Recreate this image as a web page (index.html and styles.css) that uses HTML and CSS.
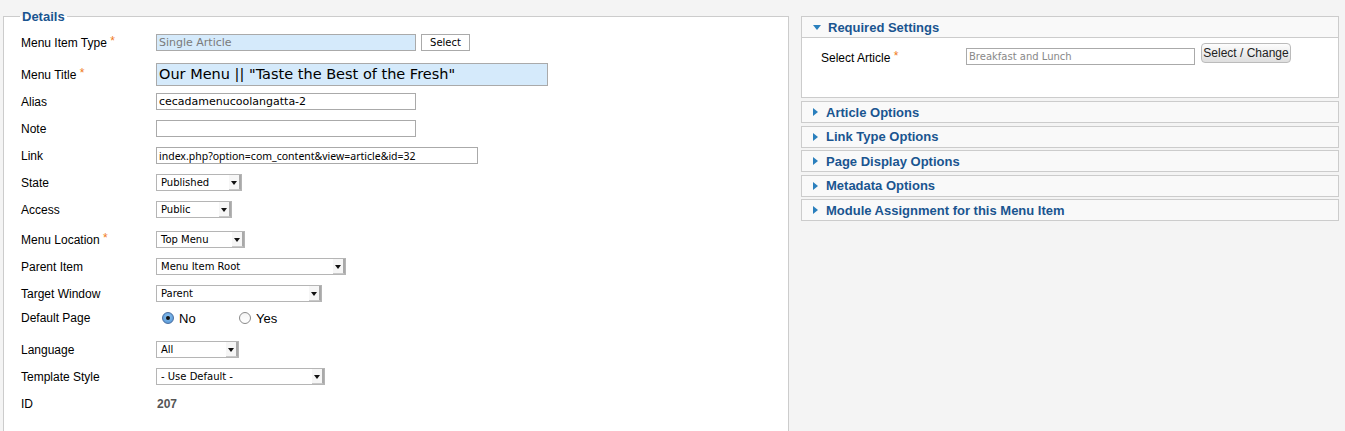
FILE: index.html
```html
<!DOCTYPE html>
<html>
  <head>
    <meta charset="UTF-8" />
    <title>Edit Menu Item</title>
    <link rel="stylesheet" href="styles.css">
  </head>
  <body>
    <div class="page">
      <fieldset class="details">
        <legend>Details</legend>

        <div class="row">
          <label>Menu Item Type <span class="star">*</span></label>
          <input type="text" class="field readonly w260" value="Single Article" readonly />
          <button class="plain-btn">Select</button>
        </div>

        <div class="row row-title">
          <label>Menu Title <span class="star">*</span></label>
          <input type="text" class="field title" value='Our Menu || "Taste the Best of the Fresh"' />
        </div>

        <div class="row">
          <label>Alias</label>
          <input type="text" class="field w260" value="cecadamenucoolangatta-2" />
        </div>

        <div class="row">
          <label>Note</label>
          <input type="text" class="field w260" value="" />
        </div>

        <div class="row">
          <label>Link</label>
          <input type="text" class="field link w322" value="index.php?option=com_content&amp;view=article&amp;id=32" />
        </div>

        <div class="row">
          <label>State</label>
          <div class="select" style="width: 86px"><span>Published</span><i class="arrow"></i></div>
        </div>

        <div class="row">
          <label>Access</label>
          <div class="select" style="width: 76px"><span>Public</span><i class="arrow"></i></div>
        </div>

        <div class="row row-loc">
          <label>Menu Location <span class="star">*</span></label>
          <div class="select" style="width: 89px"><span>Top Menu</span><i class="arrow"></i></div>
        </div>

        <div class="row">
          <label>Parent Item</label>
          <div class="select" style="width: 190px"><span>Menu Item Root</span><i class="arrow"></i></div>
        </div>

        <div class="row">
          <label>Target Window</label>
          <div class="select" style="width: 166px"><span>Parent</span><i class="arrow"></i></div>
        </div>

        <div class="row row-radio">
          <label>Default Page</label>
          <div class="radios">
            <span class="radio checked"></span><span class="radio-label">No</span>
            <span class="radio"></span><span class="radio-label">Yes</span>
          </div>
        </div>

        <div class="row row-lang">
          <label>Language</label>
          <div class="select" style="width: 83px"><span>All</span><i class="arrow"></i></div>
        </div>

        <div class="row">
          <label>Template Style</label>
          <div class="select" style="width: 169px"><span>- Use Default -</span><i class="arrow"></i></div>
        </div>

        <div class="row">
          <label>ID</label>
          <span class="id-value">207</span>
        </div>
      </fieldset>

      <div class="sliders">
        <div class="panel open">
          <h3 class="panel-head"><span class="tri down"></span>Required Settings</h3>
          <div class="panel-body">
            <label>Select Article <span class="star">*</span></label>
            <input type="text" class="field article" value="Breakfast and Lunch" readonly />
            <button class="round-btn">Select / Change</button>
          </div>
        </div>
        <div class="panel">
          <h3 class="panel-head"><span class="tri"></span>Article Options</h3>
        </div>
        <div class="panel">
          <h3 class="panel-head"><span class="tri"></span>Link Type Options</h3>
        </div>
        <div class="panel">
          <h3 class="panel-head"><span class="tri"></span>Page Display Options</h3>
        </div>
        <div class="panel">
          <h3 class="panel-head"><span class="tri"></span>Metadata Options</h3>
        </div>
        <div class="panel">
          <h3 class="panel-head"><span class="tri"></span>Module Assignment for this Menu Item</h3>
        </div>
      </div>
    </div>
  </body>
</html>
```

FILE: styles.css
```css
body {
  margin: 0;
  background-color: #f4f4f4;
  font-family: "Liberation Sans", Arial, sans-serif;
  font-size: 12px;
  color: #000;
}

.page {
  display: flex;
  align-items: flex-start;
  padding: 10px 0 0 3px;
}

.details {
  width: 786px;
  height: 440px;
  margin: 0;
  padding: 6px 0 0 16px;
  border: 1px solid #ccc;
  background-color: #fff;
  box-sizing: border-box;
}

.details legend {
  padding: 0 2px;
  font-size: 13px;
  font-weight: bold;
  color: #1a5590;
  line-height: 13px;
}

.row {
  display: flex;
  align-items: center;
  height: 27px;
  padding-left: 1px;
}

.row label {
  width: 135px;
  flex-shrink: 0;
}

.star {
  color: #f07a1a;
  font-size: 12px;
  vertical-align: top;
  position: relative;
  top: -2px;
}

.row-title {
  height: 27px;
  padding-top: 5px;
}

.row-loc {
  margin-top: 3px;
}

.row-radio {
  height: 24px;
  margin-top: -1px;
  padding-bottom: 1px;
}

.row-lang {
  margin-top: 5px;
}

.field {
  height: 17px;
  padding: 0 0 0 2px;
  border: 1px solid #aaa;
  box-sizing: border-box;
  font-family: "DejaVu Sans", sans-serif;
  font-size: 11px;
  color: #000;
  background-color: #fff;
  outline: none;
}

.field.link {
  font-family: "Noto Sans", "DejaVu Sans", sans-serif;
  font-size: 10.5px;
}

.w260 {
  width: 260px;
}

.w322 {
  width: 322px;
}

.readonly {
  background-color: #d5eafb;
  color: #7a7a7a;
}

.title {
  width: 392px;
  height: 23px;
  padding: 0 0 1px 2px;
  font-size: 14.5px;
  line-height: 20px;
  background-color: #d5eafb;
}

.plain-btn {
  margin-left: 5px;
  width: 49px;
  height: 17px;
  padding: 0;
  border: 1px solid #aaa;
  background-color: #fff;
  font-family: "DejaVu Sans", sans-serif;
  font-size: 10px;
  color: #000;
}

.select {
  display: flex;
  align-items: center;
  justify-content: space-between;
  height: 17px;
  border: 1px solid #b5b5b5;
  box-sizing: border-box;
  background-color: #fff;
  font-family: "DejaVu Sans", sans-serif;
  font-size: 10px;
  padding-left: 4px;
}

.arrow {
  position: relative;
  width: 12px;
  height: 15px;
  border-right: 2px solid #a9a9a9;
  border-bottom: 1px solid #c9c9c9;
  box-sizing: border-box;
  background-color: #f6f6f6;
}

.arrow::after {
  content: "";
  position: absolute;
  left: 2px;
  top: 6px;
  border-left: 3px solid transparent;
  border-right: 3px solid transparent;
  border-top: 4px solid #111;
}

.radios {
  display: flex;
  align-items: center;
  padding-left: 6px;
  font-size: 13px;
}

.radio {
  width: 12px;
  height: 12px;
  border: 1px solid #8a8a8a;
  border-radius: 50%;
  box-sizing: border-box;
  background: linear-gradient(#f4f4f4, #fff);
  position: relative;
}

.radio.checked {
  border-color: #4a6ea0;
  background: radial-gradient(circle at 50% 40%, #8fc4f2, #4c8fd0);
}

.radio.checked::after {
  content: "";
  position: absolute;
  left: 3px;
  top: 3px;
  width: 4px;
  height: 4px;
  border-radius: 50%;
  background-color: #111;
}

.radio-label {
  margin-left: 5px;
  width: 60px;
}

.id-value {
  padding-left: 1px;
  font-weight: bold;
  color: #555;
}

.sliders {
  width: 538px;
  margin-left: 12px;
  margin-top: 6px;
}

.panel {
  border: 1px solid #ccc;
  margin-bottom: 2.5px;
  background-color: #f9f9f9;
}

.panel-head {
  display: flex;
  align-items: center;
  height: 20px;
  margin: 0;
  padding-left: 11px;
  font-size: 13px;
  font-weight: bold;
  color: #1a5590;
}

.open {
  margin-bottom: 3px;
}

.open .panel-head {
  border-bottom: 1px solid #ccc;
}

.tri {
  width: 0;
  height: 0;
  margin-right: 8px;
  border-top: 4px solid transparent;
  border-bottom: 4px solid transparent;
  border-left: 5px solid #2a7fbd;
}

.tri.down {
  margin-right: 7px;
  border-left: 4px solid transparent;
  border-right: 4px solid transparent;
  border-top: 5px solid #2a7fbd;
  border-bottom: 0;
}

.panel-body {
  display: flex;
  align-items: flex-start;
  height: 59px;
  padding: 5px 0 0 19px;
  box-sizing: border-box;
  background-color: #fff;
}

.panel-body label {
  width: 145px;
  padding-top: 8px;
}

.article {
  width: 229px;
  margin-top: 5px;
  font-size: 10px;
  color: #888;
}

.round-btn {
  margin-left: 6px;
  width: 90px;
  height: 20px;
  padding: 0;
  border: 1px solid #bbb;
  border-radius: 4px;
  background: linear-gradient(#fdfdfd, #dedede);
  font-family: "Liberation Sans", Arial, sans-serif;
  font-size: 12px;
  color: #222;
}
```
